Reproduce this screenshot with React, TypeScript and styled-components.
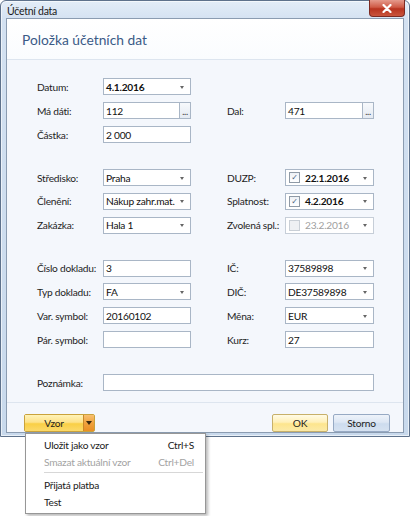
import React from 'react';
import styled, { createGlobalStyle } from 'styled-components';

const GlobalStyle = createGlobalStyle`
  html, body {
    margin: 0;
    padding: 0;
    background: #ffffff;
  }
  body {
    font-family: Lato, "Open Sans", "Liberation Sans", sans-serif;
    font-size: 10.2px;
    letter-spacing: -0.25px;
    color: #1e1e1e;
  }
`;

type Control =
    | { kind: 'text'; value?: string }
    | { kind: 'combo'; value: string; bold?: boolean }
    | { kind: 'browse'; value: string }
    | { kind: 'check'; value: string; checked: boolean; disabled?: boolean };

interface FieldDef {
    label: string;
    control: Control;
    side: 'left' | 'right';
}

const sections: FieldDef[][] = [
    [
        { label: 'Datum:', control: { kind: 'combo', value: '4.1.2016', bold: true }, side: 'left' },
        { label: 'Má dáti:', control: { kind: 'browse', value: '112' }, side: 'left' },
        { label: 'Dal:', control: { kind: 'browse', value: '471' }, side: 'right' },
        { label: 'Částka:', control: { kind: 'text', value: '2 000' }, side: 'left' },
    ],
    [
        { label: 'Středisko:', control: { kind: 'combo', value: 'Praha' }, side: 'left' },
        { label: 'DUZP:', control: { kind: 'check', value: '22.1.2016', checked: true }, side: 'right' },
        { label: 'Členění:', control: { kind: 'combo', value: 'Nákup zahr.mat.' }, side: 'left' },
        { label: 'Splatnost:', control: { kind: 'check', value: '4.2.2016', checked: true }, side: 'right' },
        { label: 'Zakázka:', control: { kind: 'combo', value: 'Hala 1' }, side: 'left' },
        { label: 'Zvolená spl.:', control: { kind: 'check', value: '23.2.2016', checked: false, disabled: true }, side: 'right' },
    ],
    [
        { label: 'Číslo dokladu:', control: { kind: 'text', value: '3' }, side: 'left' },
        { label: 'IČ:', control: { kind: 'combo', value: '37589898' }, side: 'right' },
        { label: 'Typ dokladu:', control: { kind: 'combo', value: 'FA' }, side: 'left' },
        { label: 'DIČ:', control: { kind: 'combo', value: 'DE37589898' }, side: 'right' },
        { label: 'Var. symbol:', control: { kind: 'text', value: '20160102' }, side: 'left' },
        { label: 'Měna:', control: { kind: 'combo', value: 'EUR' }, side: 'right' },
        { label: 'Pár. symbol:', control: { kind: 'text' }, side: 'left' },
        { label: 'Kurz:', control: { kind: 'text', value: '27' }, side: 'right' },
    ],
];

function renderControl(c: Control) {
    switch (c.kind) {
        case 'text':
            return <TextBox>{c.value}</TextBox>;
        case 'combo':
            return (
                <TextBox>
                    <Value $bold={c.bold}>{c.value}</Value>
                    <Arrow />
                </TextBox>
            );
        case 'browse':
            return (
                <BrowseWrap>
                    <TextBox>{c.value}</TextBox>
                    <DotsBtn>...</DotsBtn>
                </BrowseWrap>
            );
        case 'check':
            return (
                <TextBox $disabled={c.disabled}>
                    <CheckBox $disabled={c.disabled}>{c.checked ? '✓' : ''}</CheckBox>
                    <Value $bold={!c.disabled} $disabled={c.disabled}>{c.value}</Value>
                    <Arrow />
                </TextBox>
            );
    }
}

function App() {
    return (
        <Page>
            <GlobalStyle />
            <Window>
                <TitleBar>
                    <Title>Účetní data</Title>
                    <CloseBtn>
                        <svg width="10" height="9" viewBox="0 0 10 9">
                            <path d="M1.5 1 L8.5 8 M8.5 1 L1.5 8" stroke="#ffffff" strokeWidth="2.2" strokeLinecap="round" />
                        </svg>
                    </CloseBtn>
                </TitleBar>
                <Client>
                    <Header>
                        <Heading>Položka účetních dat</Heading>
                    </Header>
                    <Body>
                        {sections.map((fields, i) => (
                            <FieldGrid key={i}>
                                {fields.map((f) => (
                                    <React.Fragment key={f.label}>
                                        <Label $side={f.side}>{f.label}</Label>
                                        <Cell $side={f.side}>{renderControl(f.control)}</Cell>
                                    </React.Fragment>
                                ))}
                            </FieldGrid>
                        ))}
                        <FieldGrid>
                            <Label $side="left">Poznámka:</Label>
                            <Cell $side="wide">
                                <TextBox />
                            </Cell>
                        </FieldGrid>
                    </Body>
                    <Footer>
                        <SplitButton>
                            <SplitMain>Vzor</SplitMain>
                            <SplitArrow />
                        </SplitButton>
                        <ButtonGroup>
                            <DialogButton $variant="primary">OK</DialogButton>
                            <DialogButton $variant="secondary">Storno</DialogButton>
                        </ButtonGroup>
                    </Footer>
                </Client>
            </Window>
            <Menu>
                <MenuItem>
                    <span>Uložit jako vzor</span>
                    <span>Ctrl+S</span>
                </MenuItem>
                <MenuItem $disabled>
                    <span>Smazat aktuální vzor</span>
                    <span>Ctrl+Del</span>
                </MenuItem>
                <MenuSeparator />
                <MenuItem>
                    <span>Přijatá platba</span>
                </MenuItem>
                <MenuItem>
                    <span>Test</span>
                </MenuItem>
            </Menu>
        </Page>
    );
}

// page + window
const Page = styled.div`
    position: relative;
    width: 411px;
    height: 516px;
    overflow: hidden;
`;
const Window = styled.div`
    width: 410px;
    height: 437px;
    box-sizing: border-box;
    display: flex;
    flex-direction: column;
    border: 1px solid #5e728c;
    border-radius: 6px 6px 0 0;
    background: linear-gradient(180deg, #e3edf8 0%, #d3e1f1 20px, #c8d9ec 100%);
    box-shadow: inset 0 0 0 1px rgba(255, 255, 255, 0.6);
`;
const TitleBar = styled.div`
    height: 21px;
    display: flex;
    align-items: flex-start;
    justify-content: space-between;
    padding: 0 4px 0 6px;
`;
const Title = styled.span`
    margin-top: 4px;
    font-size: 10.5px;
    color: #1a1a1a;
`;
const CloseBtn = styled.div`
    width: 36px;
    height: 17px;
    margin-top: -1px;
    display: flex;
    align-items: center;
    justify-content: center;
    box-sizing: border-box;
    border: 1px solid #7c2a22;
    border-top: none;
    border-radius: 0 0 4px 4px;
    background: linear-gradient(180deg, #e59a8c 0%, #cf5a46 45%, #b8331f 55%, #c9553d 100%);
`;
const Client = styled.div`
    flex: 1;
    margin: 0 5px 3px 5px;
    display: flex;
    flex-direction: column;
    border: 1px solid #8b9cb1;
    background: #f4f7fc;
`;

// header
const Header = styled.div`
    height: 40px;
    display: flex;
    align-items: center;
    padding-left: 15px;
    background: linear-gradient(180deg, #ffffff 0%, #fafcfe 100%);
    border-bottom: 1px solid #dde5ef;
`;
const Heading = styled.h1`
    margin: 0;
    font-size: 13.8px;
    font-weight: normal;
    letter-spacing: 0;
    color: #3a5a86;
`;

// form body
const Body = styled.div`
    display: flex;
    flex-direction: column;
    gap: 26px;
    padding: 18px 0 11px 30px;
    border-bottom: 1px solid #dde5ef;
`;
const FieldGrid = styled.div`
    display: grid;
    grid-template-columns: 66px 88px 36px 58px 89px;
    grid-auto-rows: 17px;
    row-gap: 6.8px;
    align-items: center;
`;
const Label = styled.span<{ $side: 'left' | 'right' }>`
    grid-column: ${(p) => (p.$side === 'left' ? 1 : 4)};
    white-space: nowrap;
    color: #1e1e1e;
`;
const Cell = styled.div<{ $side: 'left' | 'right' | 'wide' }>`
    grid-column: ${(p) => (p.$side === 'left' ? '2' : p.$side === 'right' ? '5' : '2 / 6')};
    height: 17px;
    display: flex;
`;
const TextBox = styled.div<{ $disabled?: boolean }>`
    flex: 1;
    min-width: 0;
    height: 17px;
    box-sizing: border-box;
    display: flex;
    align-items: center;
    padding: 0 0 0 2px;
    border: 1px solid ${(p) => (p.$disabled ? '#c6ced8' : '#a9b6c6')};
    background: #ffffff;
    white-space: nowrap;
    overflow: hidden;
    color: #111111;
`;
const Value = styled.span<{ $bold?: boolean; $disabled?: boolean }>`
    flex: 1;
    font-weight: ${(p) => (p.$bold ? 700 : 400)};
    color: ${(p) => (p.$disabled ? '#a0a0a0' : '#111111')};
`;
const Arrow = styled.span`
    width: 0;
    height: 0;
    margin: 1px 6px 0 4px;
    border-left: 2.5px solid transparent;
    border-right: 2.5px solid transparent;
    border-top: 3px solid #666666;
`;
const BrowseWrap = styled.div`
    flex: 1;
    display: flex;
`;
const DotsBtn = styled.div`
    width: 12px;
    height: 17px;
    box-sizing: border-box;
    display: flex;
    align-items: flex-end;
    justify-content: center;
    padding-bottom: 2px;
    margin-left: -1px;
    border: 1px solid #a9b6c6;
    background: linear-gradient(180deg, #f7f9fc 0%, #e4eaf2 100%);
    font-size: 9px;
    line-height: 9px;
    color: #333333;
`;
const CheckBox = styled.span<{ $disabled?: boolean }>`
    width: 9px;
    height: 9px;
    margin: 0 5px 0 1px;
    flex: none;
    display: flex;
    align-items: center;
    justify-content: center;
    border: 1px solid ${(p) => (p.$disabled ? '#c9cfd6' : '#8f9aa6')};
    background: ${(p) => (p.$disabled ? '#eef0f3' : 'linear-gradient(180deg, #eef1f5 0%, #ffffff 100%)')};
    font-family: "DejaVu Sans", sans-serif;
    font-size: 8px;
    line-height: 9px;
    color: #4a5f80;
`;

// footer
const Footer = styled.div`
    flex: 1;
    display: flex;
    align-items: flex-start;
    justify-content: space-between;
    padding: 11px 13px 0 17px;
`;
const SplitButton = styled.div`
    display: flex;
    height: 18px;
    box-sizing: border-box;
    border: 1px solid #c9a23c;
    border-radius: 2px;
`;
const SplitMain = styled.div`
    width: 58px;
    display: flex;
    align-items: center;
    justify-content: center;
    background: linear-gradient(180deg, #fff3b8 0%, #fde28a 45%, #f9cf45 55%, #fbd96a 100%);
    color: #1e1e1e;
`;
const SplitArrow = styled.div`
    width: 10px;
    display: flex;
    align-items: center;
    justify-content: center;
    border-left: 1px solid #c98a2a;
    background: linear-gradient(180deg, #f8c070 0%, #f0a23e 50%, #e98f24 100%);
    &::after {
        content: '';
        border-left: 3px solid transparent;
        border-right: 3px solid transparent;
        border-top: 4px solid #3a2a10;
    }
`;
const ButtonGroup = styled.div`
    display: flex;
    gap: 5px;
`;
const DialogButton = styled.div<{ $variant: 'primary' | 'secondary' }>`
    width: ${(p) => (p.$variant === 'primary' ? '56px' : '57px')};
    height: 18px;
    box-sizing: border-box;
    display: flex;
    align-items: center;
    justify-content: center;
    border-radius: 2px;
    border: 1px solid ${(p) => (p.$variant === 'primary' ? '#c7b06a' : '#97aac4')};
    background: ${(p) =>
        p.$variant === 'primary'
            ? 'linear-gradient(180deg, #fffbe6 0%, #fff0b8 45%, #fde58d 55%, #fbeaa8 100%)'
            : 'linear-gradient(180deg, #eef3fa 0%, #dde7f4 45%, #cddcee 55%, #d6e2f1 100%)'};
    color: #1e1e1e;
`;

// dropdown menu
const Menu = styled.div`
    position: absolute;
    left: 25px;
    top: 433px;
    width: 181px;
    box-sizing: border-box;
    padding: 2px 2px 3px 2px;
    background: #ffffff;
    border: 1px solid #979797;
    box-shadow: 2px 2px 3px rgba(0, 0, 0, 0.28);
`;
const MenuItem = styled.div<{ $disabled?: boolean }>`
    height: 17px;
    display: flex;
    align-items: center;
    justify-content: space-between;
    padding: 0 9px 0 16px;
    color: ${(p) => (p.$disabled ? '#a3a3a3' : '#1a1a1a')};
`;
const MenuSeparator = styled.div`
    height: 1px;
    margin: 2px 0 3px 16px;
    background: #d7d7d7;
`;

export default App;
